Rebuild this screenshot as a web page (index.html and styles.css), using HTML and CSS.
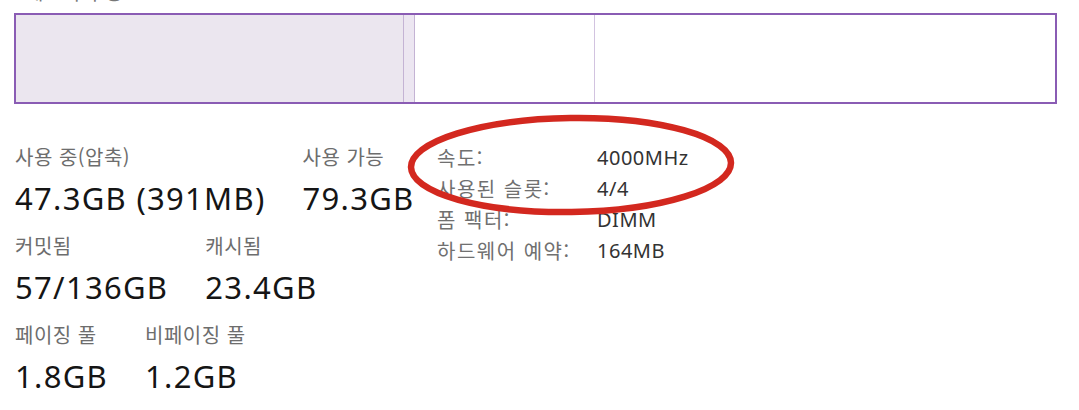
FILE: index.html
```html
<!DOCTYPE html>
<html lang="ko">
  <head>
    <meta charset="UTF-8" />
    <meta name="viewport" content="width=device-width, initial-scale=1" />
    <title>메모리</title>
    <link rel="stylesheet" href="styles.css">
  </head>
  <body>
    <div class="memory-panel">
      <div class="section-title">메모리 구성</div>

      <div class="composition-bar">
        <div class="seg seg-used"></div>
        <div class="seg seg-modified"></div>
        <div class="seg seg-standby"></div>
        <div class="seg seg-free"></div>
      </div>

      <div class="details">
        <div class="stats">
          <div class="stat-row">
            <div class="stat">
              <div class="stat-label">사용 중(압축)</div>
              <div class="stat-value">47.3GB (391MB)</div>
            </div>
            <div class="stat">
              <div class="stat-label">사용 가능</div>
              <div class="stat-value">79.3GB</div>
            </div>
          </div>
          <div class="stat-row">
            <div class="stat">
              <div class="stat-label">커밋됨</div>
              <div class="stat-value">57/136GB</div>
            </div>
            <div class="stat">
              <div class="stat-label">캐시됨</div>
              <div class="stat-value">23.4GB</div>
            </div>
          </div>
          <div class="stat-row">
            <div class="stat">
              <div class="stat-label">페이징 풀</div>
              <div class="stat-value">1.8GB</div>
            </div>
            <div class="stat">
              <div class="stat-label">비페이징 풀</div>
              <div class="stat-value">1.2GB</div>
            </div>
          </div>
        </div>

        <div class="info-table">
          <div class="info-label">속도:</div>
          <div class="info-value">4000MHz</div>
          <div class="info-label">사용된 슬롯:</div>
          <div class="info-value">4/4</div>
          <div class="info-label">폼 팩터:</div>
          <div class="info-value">DIMM</div>
          <div class="info-label">하드웨어 예약:</div>
          <div class="info-value">164MB</div>

          <!-- red marker drawn over speed / slots -->
          <svg class="marker" width="340" height="125" viewBox="0 0 340 125">
            <ellipse cx="164" cy="63" rx="160" ry="47" fill="none" stroke="#d3281f" stroke-width="6.5" transform="rotate(-0.8 164 63)" />
          </svg>
        </div>
      </div>
    </div>
  </body>
</html>
```

FILE: styles.css
```css
body {
  margin: 0;
  padding: 0;
  background-color: #ffffff;
  font-family: "Noto Sans", "Noto Sans CJK KR", sans-serif;
  overflow: hidden;
}

.memory-panel {
  padding: 0 22px 0 14px;
}

.section-title {
  margin-top: -22px;
  height: 35px;
  padding-left: 11px;
  font-family: "Noto Sans CJK KR", sans-serif;
  font-size: 20px;
  line-height: 28px;
  color: #777;
}

.composition-bar {
  display: flex;
  height: 87px;
  border: 2px solid #8a5cb4;
}

.seg {
  height: 100%;
}

.seg-used {
  width: 387px;
  background-color: #ebe6ef;
  border-right: 1px solid #c4b3d4;
}

.seg-modified {
  width: 10px;
  background-color: #ece6f1;
  border-right: 1px solid #c4b3d4;
}

.seg-standby {
  width: 179px;
  border-right: 1px solid #d2c3e0;
}

.seg-free {
  flex: 1;
}

.details {
  display: flex;
  padding-top: 39px;
}

.stats {
  width: 422px;
  padding-left: 1px;
}

.stat-row {
  display: flex;
  gap: 37px;
  height: 89px;
}

.stat-label {
  font-family: "Noto Sans CJK KR", sans-serif;
  font-size: 20px;
  line-height: 28px;
  letter-spacing: 0.5px;
  color: #6d6d6d;
}

.stat-value {
  margin-top: 7px;
  font-size: 31px;
  line-height: 40px;
  letter-spacing: 1.3px;
  color: #151515;
}

.info-table {
  position: relative;
  display: grid;
  grid-template-columns: 160px auto;
  grid-auto-rows: 31px;
  align-content: start;
  margin-top: -1px;
  font-size: 20px;
  line-height: 31px;
}

.info-label {
  font-family: "Noto Sans CJK KR", sans-serif;
  letter-spacing: 1.5px;
  color: #707070;
}

.info-value {
  letter-spacing: 0.5px;
  color: #333;
}

.marker {
  position: absolute;
  left: -30px;
  top: -40px;
}
```
